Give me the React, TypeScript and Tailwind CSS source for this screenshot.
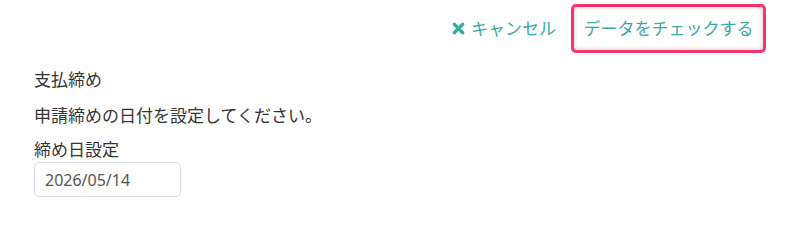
import { X } from "lucide-react";

export default function App() {
  return (
    <div className="w-[800px] h-[251px] bg-white text-[#333] text-[17px] font-['Noto_Sans','Noto_Sans_CJK_JP',sans-serif]">
      <div className="flex items-center justify-end gap-[15px] pt-[4px] pr-[34px]">
        <button className="flex items-center gap-[4px] text-[#38a9a2]">
          <X className="w-[17px] h-[17px]" strokeWidth={4.5} />
          <span>キャンセル</span>
        </button>
        <button className="h-[49px] w-[195px] rounded-[5px] border-[3px] border-[#f5336d] text-[#38a9a2] shadow-[inset_0_0_4px_rgba(0,0,0,0.25)]">
          データをチェックする
        </button>
      </div>

      <div className="px-[34px] pt-[15px]">
        <p className="leading-[24px]">支払締め</p>
        <p className="mt-[12px] leading-[24px]">申請締めの日付を設定してください。</p>
        <p className="mt-[10px] leading-[24px]">締め日設定</p>
        <div className="w-[147px] h-[35px] rounded-[5px] border border-[#d9dde3] flex items-center px-[10px] text-[16px] text-[#555]">
          2026/05/14
        </div>
      </div>
    </div>
  );
}
